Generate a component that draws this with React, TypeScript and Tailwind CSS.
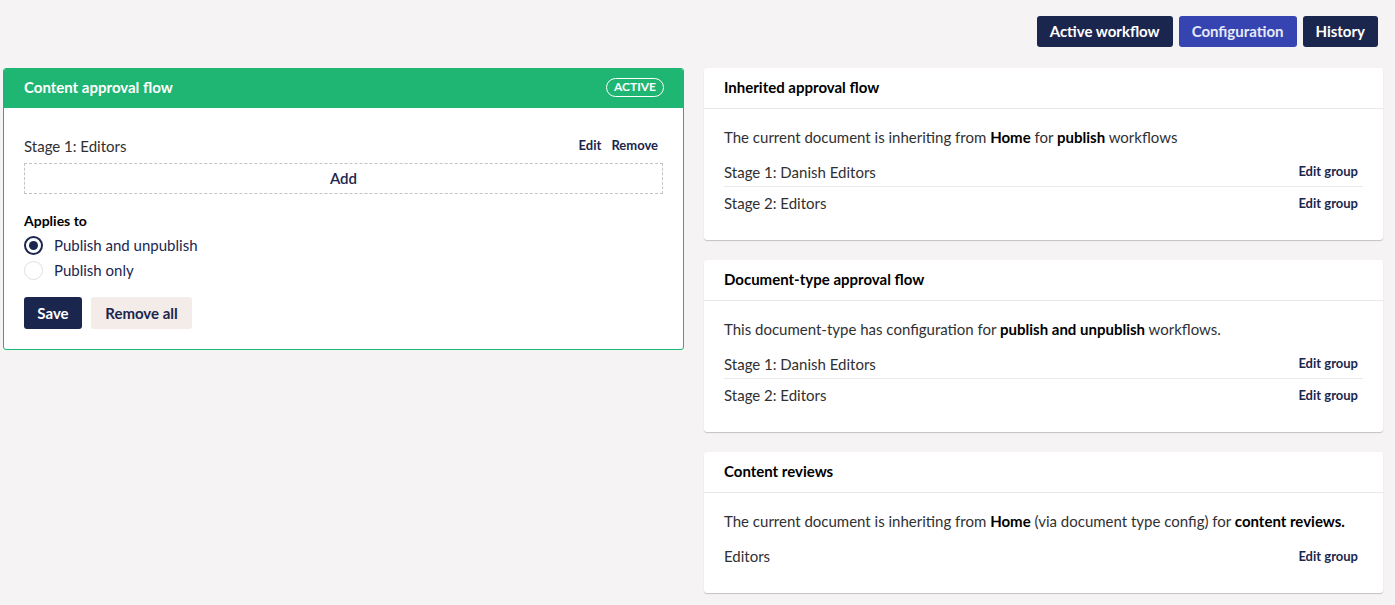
import React from "react";

const font = { fontFamily: "Lato, 'Noto Sans', sans-serif" };

function Row({ label, last }: { label: string; last?: boolean }) {
  return (
    <div
      className={`flex items-center justify-between h-[31px] pr-[5px] ${
        last ? "" : "border-b border-[#e9e9eb]"
      }`}
    >
      <span className="text-[15px] leading-5 text-[#303033] pt-px">{label}</span>
      <span className="text-[13px] font-bold text-[#1b264f] pt-[2px]">Edit group</span>
    </div>
  );
}

function Card({
  title,
  children,
}: {
  title: string;
  children: React.ReactNode;
}) {
  return (
    <div className="bg-white rounded-[3px] shadow-[0_1px_1px_rgba(0,0,0,0.2)]">
      <div className="h-[41px] px-5 pb-[2px] flex items-center border-b border-[#e9e9eb]">
        <span className="text-[15px] font-bold text-[#000]">{title}</span>
      </div>
      <div className="px-5 pt-[18px] pb-[22px]">{children}</div>
    </div>
  );
}

export default function App() {
  return (
    <div
      className="min-h-[605px] bg-[#f5f3f3] pl-[3px] pr-[12px] pt-4 pb-4"
      style={font}
    >
      <div className="flex justify-end gap-[6px] pr-[5px]">
        <button className="h-[31px] px-[13px] rounded-[3px] bg-[#1b264f] text-white text-[15px] font-bold">
          Active workflow
        </button>
        <button className="h-[31px] px-[13px] rounded-[3px] bg-[#3544b1] text-[#e8eaf8] text-[15px] font-bold">
          Configuration
        </button>
        <button className="h-[31px] px-[13px] rounded-[3px] bg-[#1b264f] text-white text-[15px] font-bold">
          History
        </button>
      </div>

      <div className="flex items-start gap-5 mt-[21px]">
        <div className="w-[681px] shrink-0 rounded-[3px] border border-[#1fb572] bg-white overflow-hidden">
          <div className="h-[40px] -mt-px -mx-px bg-[#1fb572] flex items-center justify-between pl-[21px] pr-5 pb-[2px]">
            <span className="text-white text-[15px] font-bold">
              Content approval flow
            </span>
            <span className="border border-white rounded-full px-[7px] h-[19px] flex items-center text-white text-[12px] font-bold leading-none">
              ACTIVE
            </span>
          </div>
          <div className="px-5 pt-[28px] pb-5">
            <div className="flex items-center justify-between h-5 mb-[7px]">
              <span className="text-[15px] text-[#303033]">
                Stage 1: Editors
              </span>
              <span className="flex gap-[10px] text-[13px] font-bold text-[#1b264f] pr-[5px]">
                <span>Edit</span>
                <span>Remove</span>
              </span>
            </div>
            <div className="h-[31px] border border-dashed border-[#c4c4c4] flex items-center justify-center text-[15px] font-semibold text-[#1b264f]">
              Add
            </div>
            <div className="mt-[17px] text-[14px] font-bold leading-5 text-[#000]">
              Applies to
            </div>
            <div className="mt-[2px]">
              <div className="flex items-center h-[25px] gap-[11px]">
                <span className="w-[19px] h-[19px] rounded-full border-2 border-[#1b264f] flex items-center justify-center">
                  <span className="w-[9px] h-[9px] rounded-full bg-[#1b264f]" />
                </span>
                <span className="text-[15px] text-[#1b264f]">
                  Publish and unpublish
                </span>
              </div>
              <div className="flex items-center h-[25px] gap-[11px]">
                <span className="w-[19px] h-[19px] rounded-full border border-[#e0e0e0]" />
                <span className="text-[15px] text-[#1b264f]">Publish only</span>
              </div>
            </div>
            <div className="flex gap-[9px] mt-[14px]">
              <button className="h-[32px] w-[58px] rounded-[3px] bg-[#1b264f] text-white text-[15px] font-bold">
                Save
              </button>
              <button className="h-[32px] w-[101px] rounded-[3px] bg-[#f3ece8] text-[#1b264f] text-[15px] font-bold">
                Remove all
              </button>
            </div>
          </div>
        </div>

        <div className="flex-1 flex flex-col gap-5">
          <Card title="Inherited approval flow">
            <p className="text-[15px] leading-5 text-[#303033] mb-[9px]">
              The current document is inheriting from{" "}
              <b className="text-black">Home</b> for{" "}
              <b className="text-black">publish</b> workflows
            </p>
            <Row label="Stage 1: Danish Editors" />
            <Row label="Stage 2: Editors" last />
          </Card>
          <Card title="Document-type approval flow">
            <p className="text-[15px] leading-5 text-[#303033] mb-[9px]">
              This document-type has configuration for{" "}
              <b className="text-black">publish and unpublish</b> workflows.
            </p>
            <Row label="Stage 1: Danish Editors" />
            <Row label="Stage 2: Editors" last />
          </Card>
          <Card title="Content reviews">
            <p className="text-[15px] leading-5 text-[#303033] mb-[9px]">
              The current document is inheriting from{" "}
              <b className="text-black">Home</b> (via document type config) for{" "}
              <b className="text-black">content reviews.</b>
            </p>
            <Row label="Editors" last />
          </Card>
        </div>
      </div>
    </div>
  );
}
